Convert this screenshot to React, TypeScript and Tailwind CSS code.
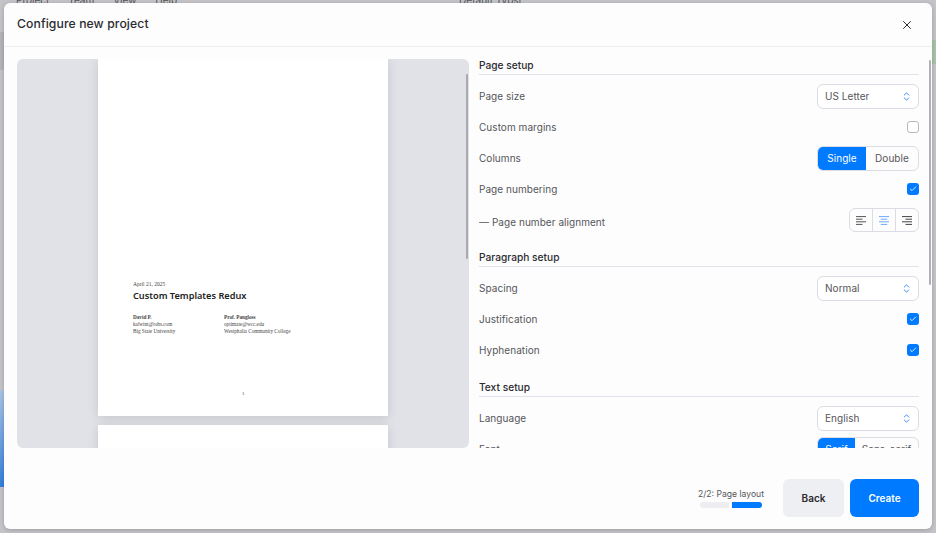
import { Check, ChevronsUpDown, X } from "lucide-react";

const sans = "font-['Inter',sans-serif]";

function Row({ label, h, children }: { label: string; h: string; children?: React.ReactNode }) {
    return (
        <div className={`flex items-center justify-between ${h}`}>
            <span className="text-[10px] text-[#55555b] tracking-[0.05px]">{label}</span>
            {children}
        </div>
    );
}

function Select({ value }: { value: string }) {
    return (
        <div className="flex items-center justify-between w-[102px] h-[25px] border border-[#dcdce4] rounded-[6px] pl-[7px] pr-[6px] bg-white">
            <span className="text-[10px] text-[#55555b] tracking-[0.05px]">{value}</span>
            <ChevronsUpDown size={11} strokeWidth={2} className="text-[#2f80f5]" />
        </div>
    );
}

function Toggle() {
    return (
        <div className="flex items-center justify-center w-3 h-3 rounded-[3px] bg-[#007aff]">
            <Check size={8} strokeWidth={2.5} className="text-white" />
        </div>
    );
}

function Segmented({ left, right, leftW, rightW }: { left: string; right: string; leftW: string; rightW: string }) {
    return (
        <div className="flex h-[25px] border border-[#dcdce4] rounded-[6px] overflow-hidden text-[10px] tracking-[0.05px]">
            <div className={`flex items-center justify-center bg-[#007aff] text-white ${leftW}`}>{left}</div>
            <div className={`flex items-center justify-center text-[#55555b] ${rightW}`}>{right}</div>
        </div>
    );
}

function AlignIcon({ kind, color }: { kind: "left" | "center" | "right"; color: string }) {
    const widths = [10, 6.5, 10, 6.5];
    return (
        <svg width="10" height="9" viewBox="0 0 10 9" fill="none" stroke={color} strokeWidth="1">
            {widths.map((w, i) => {
                const start = kind === "left" ? 0 : kind === "center" ? (10 - w) / 2 : 10 - w;
                return <line key={i} x1={start} x2={start + w} y1={i * 2.6 + 0.6} y2={i * 2.6 + 0.6} />;
            })}
        </svg>
    );
}

function Heading({ title }: { title: string }) {
    return (
        <div className="h-[16px] border-b border-[#e2e2ea] text-[10.2px] leading-[13px] font-medium text-[#2b2b30]">
            {title}
        </div>
    );
}

export default function App() {
    return (
        <div className={`relative w-[936px] h-[533px] overflow-hidden bg-[#c4c4c8] ${sans}`}>
            {/* app behind the dialog */}
            <div className="absolute left-[16px] top-[-7px] flex gap-[19px] text-[10px] text-[#55555b]">
                <span>Project</span>
                <span>Team</span>
                <span>View</span>
                <span>Help</span>
            </div>
            <div className="absolute left-[459px] top-[-7px] text-[10px] text-[#55555b]">Default Typst</div>
            <div className="absolute left-0 top-[32px] w-[4px] h-[38px] bg-[#b4b4b8]" />
            <div className="absolute left-0 top-[390px] w-[4px] h-[97px] bg-gradient-to-b from-[#a9c3e2] to-[#2f7fdc]" />
            <div className="absolute right-0 top-[40px] w-[4px] h-[24px] bg-[#a6c4ab]" />

            <div className="absolute left-[4px] top-[3px] w-[928px] h-[526px] bg-[#fdfdfd] rounded-[6px] flex flex-col overflow-hidden shadow-[0_1px_4px_rgba(0,0,0,0.2)]">
                <div className="flex items-center justify-between h-[44px] shrink-0 border-b border-[#eeeef2] pl-[13px] pr-[18px]">
                    <span className="text-[12.2px] font-medium text-[#2b2b30] tracking-[0.1px]">Configure new project</span>
                    <X size={14} strokeWidth={1.7} className="text-[#2b2b30]" />
                </div>

                <div className="flex h-[401px] shrink-0">
                    <div className="relative ml-[13px] mt-[12px] w-[452px] h-[389px] bg-[#e1e2e7] rounded-[6px] overflow-hidden">
                        <div className="flex flex-col items-center gap-[9px]">
                            <div className="flex flex-col w-[290px] h-[357px] shrink-0 bg-white shadow-[0_2px_10px_rgba(0,0,0,0.12)] pl-[35px] pt-[222px] font-['Liberation_Serif',serif] text-[#444]">
                                <div className="text-[5.5px] leading-[7px]">April 21, 2025</div>
                                <div className="mt-[1px] text-[9.2px] leading-[13px] font-semibold font-['Noto_Sans',sans-serif] text-[#222]">
                                    Custom Templates Redux
                                </div>
                                <div className="flex mt-[12px] text-[5.2px] leading-[7px]">
                                    <div className="w-[91px]">
                                        <div className="font-bold">David P.</div>
                                        <div>kalwint@tohs.com</div>
                                        <div>Big State University</div>
                                    </div>
                                    <div>
                                        <div className="font-bold">Prof. Pangloss</div>
                                        <div>optimate@wcc.edu</div>
                                        <div>Westphalia Community College</div>
                                    </div>
                                </div>
                                <div className="mt-[55px] pl-[109px] text-[5px] leading-[7px]">1</div>
                            </div>
                            <div className="w-[290px] h-[357px] shrink-0 bg-white shadow-[0_2px_10px_rgba(0,0,0,0.12)]" />
                        </div>
                        <div className="absolute right-[1px] top-[15px] w-[2px] h-[185px] rounded-full bg-[#a9a9b0]" />
                    </div>

                    <div className="relative flex-1 ml-[10px] mt-[12px] pr-[13px] overflow-hidden">
                        <Heading title="Page setup" />
                        <Row label="Page size" h="h-[42px]"><Select value="US Letter" /></Row>
                        <Row label="Custom margins" h="h-[20px]">
                            <div className="w-3 h-3 rounded-[3px] border border-[#b8b8c0] bg-white" />
                        </Row>
                        <Row label="Columns" h="h-[42px]">
                            <Segmented left="Single" right="Double" leftW="w-[48px]" rightW="w-[52px]" />
                        </Row>
                        <Row label="Page numbering" h="h-[20px]"><Toggle /></Row>
                        <Row label="— Page number alignment" h="h-[46px]">
                            <div className="flex h-[24px] mb-[4px] border border-[#dcdce4] rounded-[6px] overflow-hidden">
                                <div className="flex items-center justify-center w-[23px] border-r border-[#dcdce4]"><AlignIcon kind="left" color="#555" /></div>
                                <div className="flex items-center justify-center w-[23px] border-r border-[#dcdce4]"><AlignIcon kind="center" color="#6ea8fe" /></div>
                                <div className="flex items-center justify-center w-[22px]"><AlignIcon kind="right" color="#444" /></div>
                            </div>
                        </Row>
                        <div className="mt-[6px]"><Heading title="Paragraph setup" /></div>
                        <Row label="Spacing" h="h-[42px]"><Select value="Normal" /></Row>
                        <Row label="Justification" h="h-[20px]"><Toggle /></Row>
                        <Row label="Hyphenation" h="h-[42px]"><Toggle /></Row>
                        <div className="mt-[10px]"><Heading title="Text setup" /></div>
                        <Row label="Language" h="h-[42px]"><Select value="English" /></Row>
                        <Row label="Font" h="h-[20px]">
                            <Segmented left="Serif" right="Sans-serif" leftW="w-[37px]" rightW="w-[63px]" />
                        </Row>
                        <div className="absolute right-[1px] top-[1px] w-[2px] h-[225px] rounded-full bg-[#b0b0b6]" />
                    </div>
                </div>

                <div className="flex-1 flex items-center justify-end gap-[19px] pr-[13px] pt-[19px]">
                    <div className="flex flex-col items-center">
                        <span className="text-[8.6px] leading-[12px] text-[#55555b]">2/2: Page layout</span>
                        <div className="flex gap-[3px] mt-[2px]">
                            <div className="w-[29px] h-[6px] rounded-l-[3px] bg-[#eeeef2]" />
                            <div className="w-[30px] h-[6px] rounded-r-[3px] bg-[#007aff]" />
                        </div>
                    </div>
                    <div className="flex gap-[6px]">
                        <div className="flex items-center justify-center w-[61px] h-[38px] rounded-[6px] bg-[#eeeff3] text-[10px] font-semibold text-[#2b2b30]">Back</div>
                        <div className="flex items-center justify-center w-[69px] h-[38px] rounded-[6px] bg-[#007aff] text-[10px] font-semibold text-white">Create</div>
                    </div>
                </div>
            </div>
        </div>
    );
}
